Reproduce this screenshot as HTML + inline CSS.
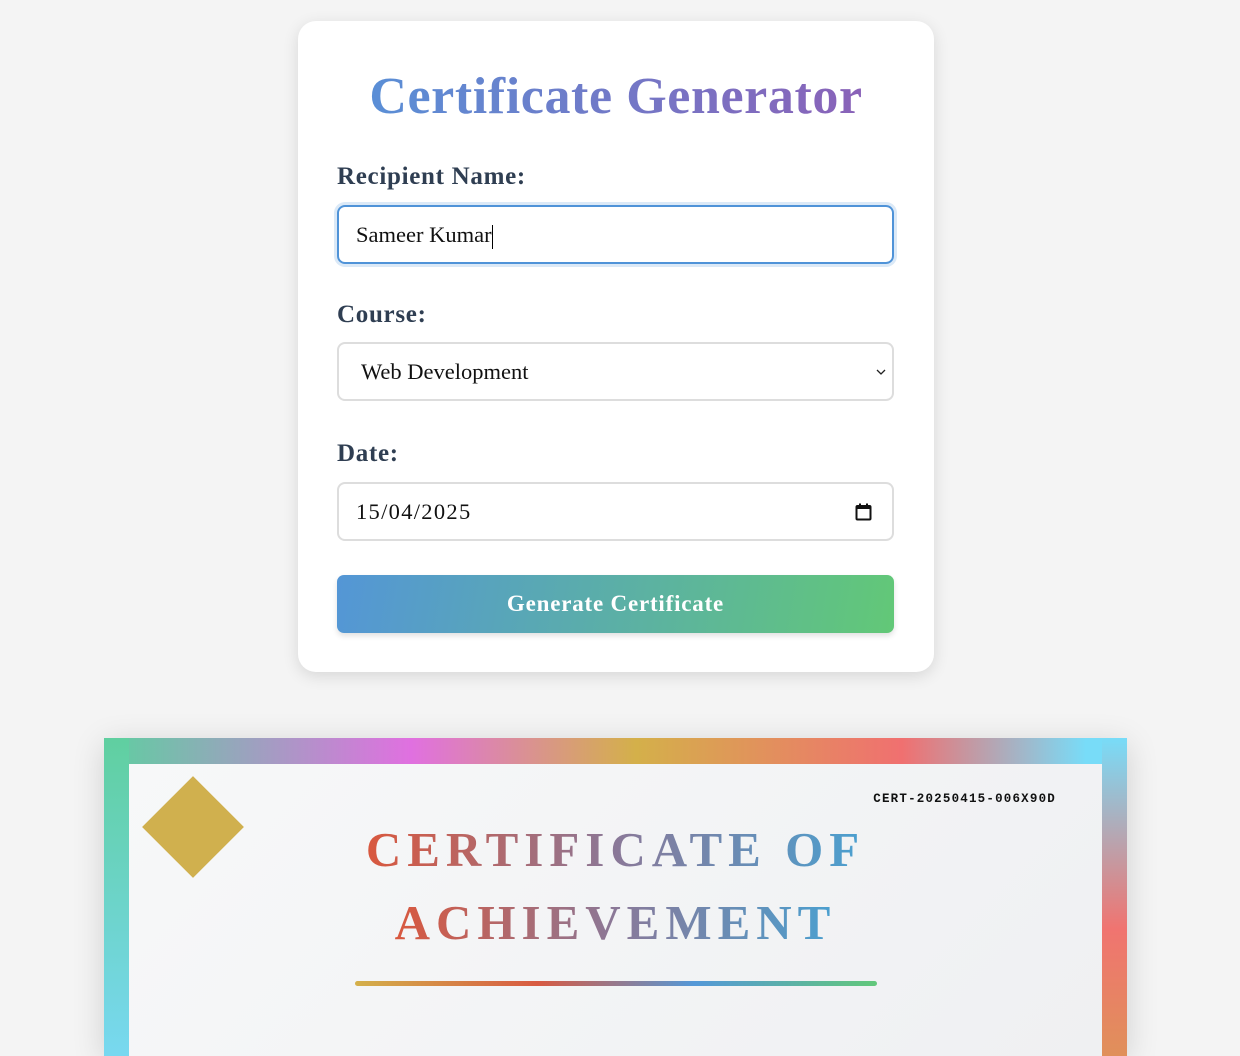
<!DOCTYPE html>
<html><head><meta charset="utf-8"><style>
*{box-sizing:border-box;margin:0;padding:0}
html,body{width:1240px;height:1056px;overflow:hidden;background:#f4f4f4;font-family:"Liberation Serif",serif}
.card{position:absolute;left:298px;top:21px;width:636px;height:651px;background:#fff;border-radius:18px;box-shadow:0 4px 16px rgba(0,0,0,.12)}
h1{position:absolute;left:0;width:100%;top:46px;text-align:center;font-size:52px;font-weight:bold;line-height:60px;letter-spacing:0.6px}
h1 span{background:linear-gradient(90deg,#5a8fd6,#8a62b8);-webkit-background-clip:text;background-clip:text;color:transparent}
.lbl{position:absolute;left:39px;font-size:25px;font-weight:bold;color:#2f3e52;letter-spacing:0.7px}
.in{position:absolute;left:39px;width:557px;height:59px;border:2px solid #ddd;border-radius:8px;font-size:22.5px;color:#111;padding-left:17px;line-height:55px}
.btn{position:absolute;left:39px;top:554px;width:557px;height:58px;border-radius:7px;background:linear-gradient(100deg,#5496d6,#62c877);color:#fff;font-weight:bold;font-size:23px;letter-spacing:0.8px;text-align:center;line-height:58px;box-shadow:0 3px 6px rgba(0,0,0,.12)}
.cert{position:absolute;left:104px;top:738px;width:1023px;height:318px;overflow:hidden;background:linear-gradient(90deg,#5ecfa0 0%,#e070e0 30%,#d4b04a 52%,#f07070 78%,#78dcf8 96%);box-shadow:0 6px 30px rgba(0,0,0,.15)}
.cert:before{content:"";position:absolute;left:0;top:0;width:25px;height:100%;background:linear-gradient(180deg,#60cfa0,#78d8f0)}
.cert:after{content:"";position:absolute;right:0;top:0;width:25px;height:100%;background:linear-gradient(180deg,#78dcf8,#f07470 60%,#e0905a)}
.inner{position:absolute;left:25px;top:26px;width:973px;height:292px;background:linear-gradient(135deg,#f7f8f9,#eff0f2);z-index:2}
.dia{position:absolute;left:28px;top:27px;width:72px;height:72px;background:#d0b04e;transform:rotate(45deg)}
.id{position:absolute;right:46px;top:28px;font-family:"Liberation Mono",monospace;font-weight:bold;font-size:12.5px;letter-spacing:1.2px;color:#111}
.t{position:absolute;left:0;width:100%;text-align:center;font-size:49px;font-weight:bold;letter-spacing:6px;line-height:60px}
.t span{background:linear-gradient(90deg,#d9583e,#8a7898 50%,#4aa0d0);-webkit-background-clip:text;background-clip:text;color:transparent}
.line{position:absolute;left:226px;top:217px;width:522px;height:5px;border-radius:3px;background:linear-gradient(90deg,#d4b04a,#d85a42 35%,#5498d8 65%,#62c87a)}
</style></head><body>
<div class="card">
<h1><span>Certificate Generator</span></h1>
<div class="lbl" style="top:142px">Recipient Name:</div>
<div class="in" style="top:184px;border-color:#4f93d8;box-shadow:0 0 0 3px #dbe9f7">Sameer Kumar<span style="display:inline-block;width:1px;height:24px;background:#000;vertical-align:middle"></span></div>
<div class="lbl" style="top:280px">Course:</div>
<div class="in" style="top:321px;padding-left:22px">Web Development<svg style="position:absolute;right:6px;top:25px" width="10" height="6" viewBox="0 0 10 6"><path d="M1 1l4 4 4-4" fill="none" stroke="#222" stroke-width="1.3"/></svg></div>
<div class="lbl" style="top:419px">Date:</div>
<div class="in" style="top:461px;letter-spacing:1.3px">15/04/2025
<svg style="position:absolute;right:20px;top:19px" width="17" height="18" viewBox="0 0 17 18"><rect x="1.5" y="3" width="14" height="13.5" fill="none" stroke="#111" stroke-width="2" rx="1"/><rect x="1.5" y="3" width="14" height="3" fill="#111"/><rect x="4" y="0.5" width="2" height="3" fill="#111"/><rect x="11" y="0.5" width="2" height="3" fill="#111"/></svg></div>
<div class="btn">Generate Certificate</div>
</div>
<div class="cert"><div class="inner">
<div class="dia"></div>
<div class="id">CERT-20250415-006X90D</div>
<div class="t" style="top:56px"><span>CERTIFICATE OF</span></div>
<div class="t" style="top:129px"><span>ACHIEVEMENT</span></div>
<div class="line"></div>
</div></div>
</body></html>
